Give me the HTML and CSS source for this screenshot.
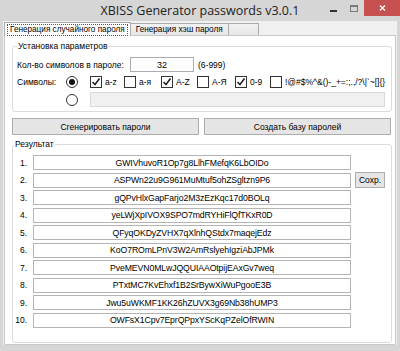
FILE: index.html
```html
<!DOCTYPE html>
<html lang="ru">
<head>
    <meta charset="UTF-8">
    <title>XBISS Generator passwords v3.0.1</title>
    <link rel="stylesheet" href="styles.css">
</head>
<body>
    <div class="window">
        <div class="titlebar">
            <span class="title">XBISS Generator passwords v3.0.1</span>
            <div class="controls">
                <span class="btn-min"></span>
                <span class="btn-max"></span>
                <span class="btn-close">
                    <svg width="7" height="6" viewBox="0 0 7 6"><path d="M1 0.5 L6 5.5 M6 0.5 L1 5.5" stroke="#fff" stroke-width="1.4"/></svg>
                </span>
            </div>
        </div>
        <div class="client">
            <div class="tabs">
                <div class="tab active"><span class="focus">Генерация случайного пароля</span></div>
                <div class="tab">Генерация хэш пароля</div>
                <div class="tab blank"></div>
            </div>
            <div class="page">
                <fieldset class="group params">
                    <legend>Установка параметров</legend>
                    <div class="row">
                        <span class="lbl-len">Кол-во символов в пароле:</span>
                        <input class="len" type="text" value="32">
                        <span class="hint">(6-999)</span>
                    </div>
                    <div class="row">
                        <span class="lbl-sym">Символы:</span>
                        <span class="radio on"></span>
                        <div class="checks">
                            <span class="check c1 on"><i class="box"><svg width="10" height="10" viewBox="0 0 10 10"><path d="M1.5 5 L4 7.5 L8.5 1.5" fill="none" stroke="#222" stroke-width="1.6"/></svg></i>a-z</span>
                            <span class="check c2"><i class="box"></i>а-я</span>
                            <span class="check c3 on"><i class="box"><svg width="10" height="10" viewBox="0 0 10 10"><path d="M1.5 5 L4 7.5 L8.5 1.5" fill="none" stroke="#222" stroke-width="1.6"/></svg></i>A-Z</span>
                            <span class="check c4"><i class="box"></i>А-Я</span>
                            <span class="check c5 on"><i class="box"><svg width="10" height="10" viewBox="0 0 10 10"><path d="M1.5 5 L4 7.5 L8.5 1.5" fill="none" stroke="#222" stroke-width="1.6"/></svg></i>0-9</span>
                            <span class="check"><i class="box"></i>!@#$%^&amp;()-_+=:;.,/?\|`~[]{}</span>
                        </div>
                    </div>
                    <div class="row">
                        <span class="radio"></span>
                        <input class="custom" type="text" disabled>
                    </div>
                </fieldset>

                <div class="actions">
                    <button class="action">Сгенерировать пароли</button>
                    <button class="action">Создать базу паролей</button>
                </div>

                <fieldset class="group result">
                    <legend>Результат</legend>
                    <div class="rrow"><span class="num">1.</span><input class="pw" type="text" value="GWIVhuvoR1Op7g8LlhFMefqK6LbOIDo" readonly></div>
                    <div class="rrow"><span class="num">2.</span><input class="pw" type="text" value="ASPWn22u9G961MuMtuf5ohZSgltzn9P6" readonly><button class="save">Сохр.</button></div>
                    <div class="rrow"><span class="num">3.</span><input class="pw" type="text" value="gQPvHlxGapFarjo2M3zEzKqc17d0BOLq" readonly></div>
                    <div class="rrow"><span class="num">4.</span><input class="pw" type="text" value="yeLWjXpIVOX9SPO7mdRYHiFlQfTKxR0D" readonly></div>
                    <div class="rrow"><span class="num">5.</span><input class="pw" type="text" value="QFyqOKDyZVHX7qXlnhQStdx7maqejEdz" readonly></div>
                    <div class="rrow"><span class="num">6.</span><input class="pw" type="text" value="KoO7ROmLPnV3W2AmRslyehIgziAbJPMk" readonly></div>
                    <div class="rrow"><span class="num">7.</span><input class="pw" type="text" value="PveMEVN0MLwJQQUIAAOtpijEAxGv7weq" readonly></div>
                    <div class="rrow"><span class="num">8.</span><input class="pw" type="text" value="PTxtMC7KvEhxf1B2SrBywXiWuPgooE3B" readonly></div>
                    <div class="rrow"><span class="num">9.</span><input class="pw" type="text" value="Jwu5uWKMF1KK26hZUVX3g69Nb38hUMP3" readonly></div>
                    <div class="rrow"><span class="num">10.</span><input class="pw" type="text" value="OWFsX1Cpv7EprQPpxYScKqPZelOfRWIN" readonly></div>
                </fieldset>
            </div>
        </div>
    </div>
</body>
</html>
```

FILE: styles.css
```css
* {
    box-sizing: border-box;
}

body {
    margin: 0;
    font-family: "Liberation Sans", Arial, sans-serif;
    font-size: 8.5px;
    color: #000;
    white-space: nowrap;
}

input, button {
    font-family: "Liberation Sans", Arial, sans-serif;
    font-size: 8.5px;
    color: #000;
    margin: 0;
}

.window {
    width: 400px;
    height: 351px;
    background: #d6d6d6;
    padding: 0 3px 6px 3px;
    display: flex;
    flex-direction: column;
}

/* title bar */
.titlebar {
    height: 21px;
    margin: 0 -3px;
    display: grid;
    grid-template-columns: 1fr auto 1fr;
}

.title {
    grid-column: 2;
    font-family: "Open Sans", sans-serif;
    font-size: 12.5px;
    line-height: 21px;
    color: #222;
}

.controls {
    grid-column: 3;
    justify-self: end;
    display: flex;
    align-items: flex-start;
}

.btn-min {
    width: 7px;
    height: 2px;
    background: #333;
    margin: 10px 13px 0 0;
}

.btn-max {
    width: 8px;
    height: 7px;
    border: 1px solid #7a7a7a;
    border-top-width: 2px;
    margin: 5px 6px 0 0;
}

.btn-close {
    width: 36px;
    height: 16px;
    background: #c75050;
    display: flex;
    align-items: center;
    justify-content: center;
}

/* client area */
.client {
    flex: 1;
    background: #f0f0f0;
    padding: 0 1px;
    display: flex;
    flex-direction: column;
}

.tabs {
    height: 14px;
    display: flex;
    align-items: flex-end;
    font-size: 8.2px;
}

.tab {
    height: 12px;
    border: 1px solid #acacac;
    border-bottom: none;
    margin-left: -1px;
    background: linear-gradient(#f2f2f2, #e6e6e6);
    padding: 0 5px;
    line-height: 11px;
}

.tab:first-child {
    margin-left: 0;
}

.tab.active {
    height: 14px;
    background: #fff;
    padding: 1px 2px 0 2px;
    margin-bottom: -1px;
    position: relative;
    z-index: 1;
}

.focus {
    display: block;
    border: 1px dotted #555;
    padding: 0 2px;
    line-height: 10px;
}

.tab.blank {
    width: 31px;
}

.page {
    flex: 1;
    border: 1px solid #c9c9c9;
    background: #fff;
    padding: 4px 0 0 7px;
}

/* group boxes */
.group {
    margin: 0;
    width: 380px;
    border: 1px solid #dcdcdc;
    border-radius: 3px;
    padding: 4px 4px 4px 4px;
}

.group legend {
    padding: 0 1px;
    line-height: 13px;
}

.row {
    display: flex;
    align-items: center;
}

.row + .row {
    margin-top: 4px;
}

.lbl-len {
    width: 113px;
}

.len {
    width: 64px;
    height: 15px;
    border: 1px solid #abadb3;
    text-align: center;
    padding: 0;
    font-size: 9px;
}

.hint {
    margin-left: 4px;
}

.lbl-sym {
    width: 49px;
}

.radio {
    flex-shrink: 0;
    width: 12px;
    height: 12px;
    border: 1px solid #333;
    border-radius: 50%;
    background: #fff;
    display: flex;
    align-items: center;
    justify-content: center;
}

.radio.on::after {
    content: "";
    width: 6px;
    height: 6px;
    border-radius: 50%;
    background: #111;
}

.row:last-child .radio {
    margin-left: 49px;
}

.checks {
    display: flex;
    margin-left: 12px;
}

.check {
    display: flex;
    align-items: center;
    gap: 3px;
}

.c1 { width: 34px; }
.c2 { width: 37px; }
.c3 { width: 36px; }
.c4 { width: 38px; }
.c5 { width: 35px; }

.box {
    flex-shrink: 0;
    width: 12px;
    height: 12px;
    border: 1px solid #333;
    background: #fff;
    display: flex;
    align-items: center;
    justify-content: center;
}

.custom {
    margin-left: 12px;
    width: 295px;
    height: 15px;
    border: 1px solid #d9d9d9;
    background: #f0f0f0;
}

/* buttons */
.actions {
    display: flex;
    gap: 5px;
    margin: 6px 0 3px 0;
}

.action {
    width: 187px;
    height: 17px;
    border: 1px solid #adadad;
    background: #e5e5e5;
    padding: 0;
}

/* result rows */
.result {
    padding: 4px 4px 12px 1px;
}

.rrow {
    display: flex;
    align-items: center;
    height: 15px;
    margin-bottom: 2.5px;
}

.num {
    width: 13px;
    text-align: right;
    margin-right: 6px;
}

.pw {
    width: 318px;
    height: 15px;
    border: 1px solid #b4b4b4;
    text-align: center;
    padding: 0;
    background: #fff;
    font-size: 8.7px;
    letter-spacing: -0.1px;
}

.save {
    margin-left: 4px;
    width: 30px;
    height: 16px;
    border: 1px solid #adadad;
    background: #e5e5e5;
    padding: 0;
}
```
